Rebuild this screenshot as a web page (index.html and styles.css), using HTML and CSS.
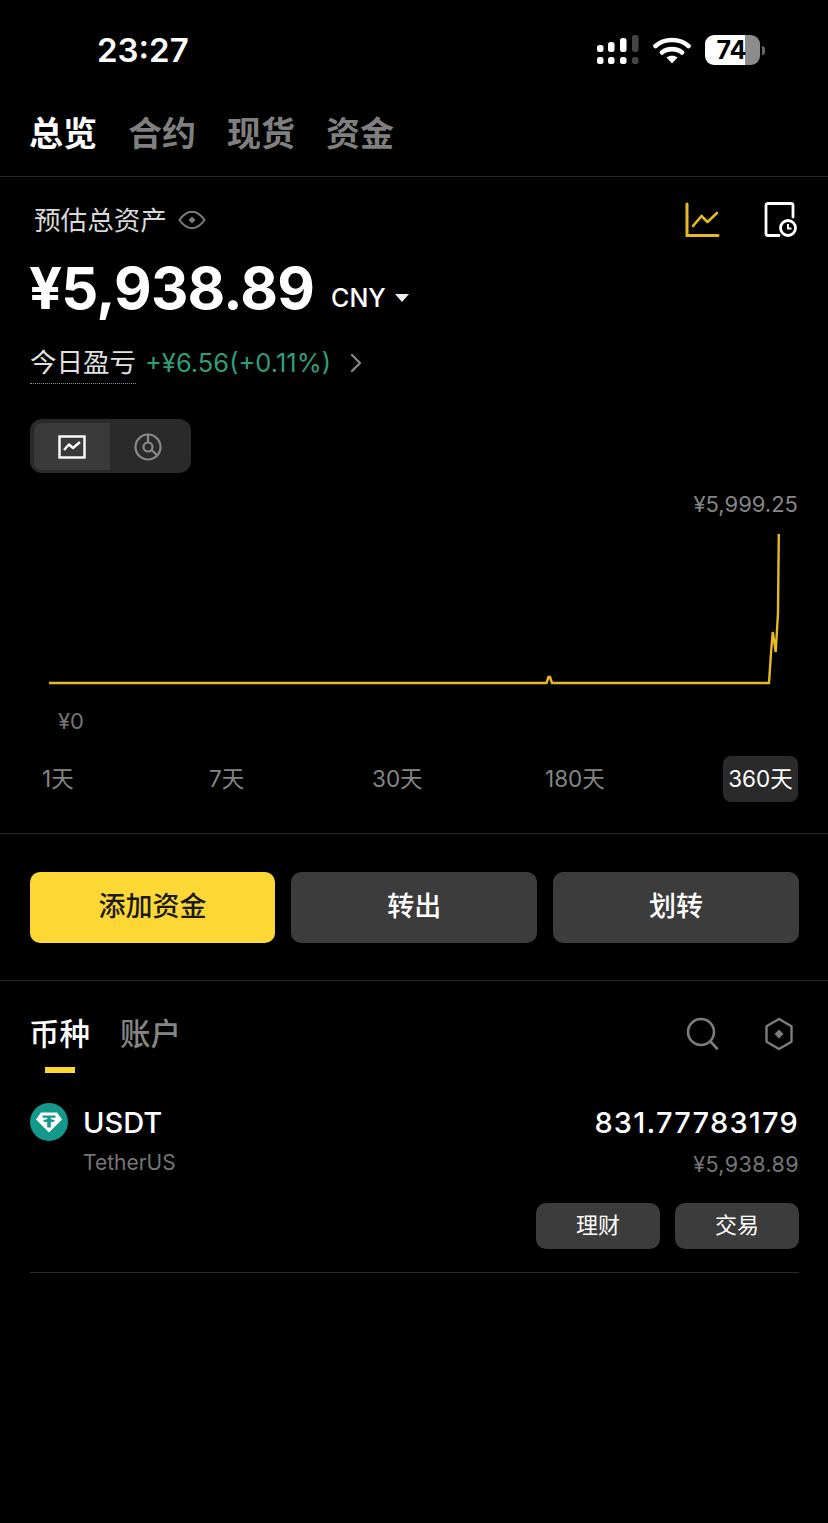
FILE: index.html
```html
<!DOCTYPE html>
<html lang="zh-CN">
<head>
    <meta charset="UTF-8">
    <meta name="viewport" content="width=device-width, initial-scale=1.0">
    <title>总览</title>
    <link rel="stylesheet" href="styles.css">
</head>
<body>
    <div class="status-bar">
        <div class="time">23:27</div>
        <div class="status-icons">
            <svg class="signal" width="44" height="30" viewBox="0 0 44 30">
                <rect x="1" y="10" width="6.500" height="7" rx="2.500" fill="#fff"/>
                <rect x="12" y="7" width="6.500" height="10" rx="2.500" fill="#fff"/>
                <rect x="24" y="3" width="6.500" height="14" rx="2.500" fill="#fff"/>
                <rect x="36" y="0" width="6.500" height="17" rx="2.500" fill="#444"/>
                <rect x="1" y="22" width="6.500" height="7" rx="2.500" fill="#fff"/>
                <rect x="12" y="22" width="6.500" height="7" rx="2.500" fill="#fff"/>
                <rect x="24" y="22" width="6.500" height="7" rx="2.500" fill="#fff"/>
                <rect x="36" y="22" width="6.500" height="7" rx="2.500" fill="#444"/>
            </svg>
            <svg class="wifi" width="38" height="28" viewBox="0 0 38 28">
                <path d="M2.500 10 C11 2 27 2 35.500 10" fill="none" stroke="#fff" stroke-width="4.600" stroke-linecap="round"/>
                <path d="M9 16.500 C14 12 24 12 29 16.500" fill="none" stroke="#fff" stroke-width="4.600" stroke-linecap="round"/>
                <path d="M13.500 21.500 C16.500 19 21.500 19 24.500 21.500 L19 27.500 Z" fill="#fff"/>
            </svg>
            <div class="battery">74</div>
            <div class="battery-nub"></div>
        </div>
    </div>

    <div class="top-tabs">
        <span class="top-tab active">总览</span>
        <span class="top-tab">合约</span>
        <span class="top-tab">现货</span>
        <span class="top-tab">资金</span>
    </div>

    <div class="overview">
        <div class="label-row">
            <span class="label">预估总资产</span>
            <svg width="28" height="20" viewBox="0 0 28 20">
                <path d="M1.500 10 C6 3.500 10 1.800 14 1.800 C18 1.800 22 3.500 26.500 10 C22 16.500 18 18.200 14 18.200 C10 18.200 6 16.500 1.500 10 Z" fill="none" stroke="#7d7d7d" stroke-width="2"/>
                <path d="M14 6.500 L17.500 10 L14 13.500 L10.500 10 Z" fill="#7d7d7d"/>
            </svg>
            <div class="label-actions">
                <svg width="36" height="36" viewBox="0 0 36 36">
                    <path d="M3 2 V33.500 H34" fill="none" stroke="#e8b923" stroke-width="3" stroke-linecap="round"/>
                    <path d="M9 24 L17.500 14 L23.500 20 L33 11" fill="none" stroke="#e8b923" stroke-width="2.600" stroke-linecap="round" stroke-linejoin="round"/>
                </svg>
                <svg width="34" height="36" viewBox="0 0 34 36">
                    <path d="M15 33.500 H4 C2.600 33.500 2 32.900 2 31.500 V3.500 C2 2.100 2.600 1.500 4 1.500 H27 C28.400 1.500 29 2.100 29 3.500 V15" fill="none" stroke="#fff" stroke-width="2.800" stroke-linecap="round"/>
                    <circle cx="24" cy="26" r="7.500" fill="none" stroke="#fff" stroke-width="2.800"/>
                    <path d="M24 22 V26.500 H27.500" fill="none" stroke="#fff" stroke-width="2"/>
                </svg>
            </div>
        </div>
        <div class="amount-row">
            <span class="amount">¥5,938.89</span>
            <span class="currency">CNY</span>
            <span class="caret"></span>
        </div>
        <div class="pnl-row">
            <span class="pnl-label">今日盈亏</span>
            <span class="pnl-value">+¥6.56(+0.11%)</span>
            <svg width="12" height="20" viewBox="0 0 12 20">
                <path d="M2 2 L10 10 L2 18" fill="none" stroke="#8a8a8a" stroke-width="2.200" stroke-linecap="round" stroke-linejoin="round"/>
            </svg>
        </div>
        <div class="toggle">
            <div class="toggle-item active">
                <svg width="28" height="24" viewBox="0 0 28 24">
                    <rect x="1.500" y="1.500" width="25" height="21" fill="none" stroke="#fff" stroke-width="2.400"/>
                    <path d="M6 15 L11 9.500 L15 13 L22 7" fill="none" stroke="#fff" stroke-width="2.400" stroke-linejoin="round"/>
                </svg>
            </div>
            <div class="toggle-item">
                <svg width="28" height="28" viewBox="0 0 28 28">
                    <circle cx="14" cy="14" r="12.500" fill="none" stroke="#8a8a8a" stroke-width="2.200"/>
                    <circle cx="14" cy="14" r="4.500" fill="none" stroke="#8a8a8a" stroke-width="2.200"/>
                    <path d="M14 2 V9.500 M17.500 17 L24 23" fill="none" stroke="#8a8a8a" stroke-width="2.200"/>
                </svg>
            </div>
        </div>

        <div class="chart-max">¥5,999.25</div>
        <svg class="chart" width="770" height="170" viewBox="30 525 770 170">
            <path d="M49 683 H546.500 L548.500 677 L550 677 L552 683 H769 L771 653 L772.700 632 L774 640 L775.700 652 L778 613 L778.800 534" fill="none" stroke="#e8b923" stroke-width="2.400"/>
        </svg>
        <div class="chart-min">¥0</div>
        <div class="ranges">
            <span class="range">1天</span>
            <span class="range">7天</span>
            <span class="range">30天</span>
            <span class="range">180天</span>
            <span class="range active">360天</span>
        </div>
    </div>

    <div class="actions">
        <div class="btn primary">添加资金</div>
        <div class="btn">转出</div>
        <div class="btn">划转</div>
    </div>

    <div class="assets">
        <div class="asset-tabs">
            <div class="asset-tab active">币种</div>
            <div class="asset-tab">账户</div>
            <div class="asset-icons">
                <svg width="34" height="34" viewBox="0 0 34 34">
                    <circle cx="15" cy="15" r="13" fill="none" stroke="#7d7d7d" stroke-width="2.600"/>
                    <path d="M24.500 24.500 L31 31.500" fill="none" stroke="#7d7d7d" stroke-width="2.600" stroke-linecap="round"/>
                </svg>
                <svg width="30" height="34" viewBox="0 0 30 34">
                    <path d="M15 2 L27.500 9.300 V24.700 L15 32 L2.500 24.700 V9.300 Z" fill="none" stroke="#7d7d7d" stroke-width="2.400" stroke-linejoin="round"/>
                    <path d="M15 12.500 L19.500 17 L15 21.500 L10.500 17 Z" fill="#7d7d7d"/>
                </svg>
            </div>
        </div>
        <div class="coin">
            <div class="coin-top">
                <svg class="coin-icon" width="38" height="38" viewBox="0 0 38 38">
                    <circle cx="19" cy="19" r="19" fill="#12998c"/>
                    <path d="M11 9.500 H27 L32 16.500 L19 29.500 L6 16.500 Z" fill="#fff"/>
                    <path d="M12.500 12.500 H25.500 V14.800 H20.800 V16.300 C23 16.500 24.800 17 24.800 17.700 C24.800 18.400 23 18.900 20.800 19.100 V24.500 H17.200 V19.100 C15 18.900 13.200 18.400 13.200 17.700 C13.200 17 15 16.500 17.200 16.300 V14.800 H12.500 Z" fill="#12998c"/>
                </svg>
                <div class="coin-name">
                    <div class="coin-symbol">USDT</div>
                    <div class="coin-full">TetherUS</div>
                </div>
                <div class="coin-values">
                    <div class="coin-amount">831.77783179</div>
                    <div class="coin-cny">¥5,938.89</div>
                </div>
            </div>
            <div class="coin-btns">
                <div class="coin-btn">理财</div>
                <div class="coin-btn">交易</div>
            </div>
        </div>
    </div>
</body>
</html>
```

FILE: styles.css
```css
* {
    box-sizing: border-box;
}
body {
    margin: 0;
    width: 828px;
    min-height: 1523px;
    background: #000;
    color: #fff;
    font-family: Inter, "Noto Sans CJK SC", sans-serif;
    overflow: hidden;
}
.status-bar {
    height: 100px;
    display: flex;
    align-items: center;
    justify-content: space-between;
    padding: 0 63px 0 97px;
}
.time {
    font-size: 33px;
    font-weight: 600;
    line-height: 40px;
}
.status-icons {
    display: flex;
    align-items: center;
}
.signal {
    margin-right: 13px;
}
.wifi {
    margin-right: 14px;
}
.battery {
    width: 55px;
    height: 30px;
    border-radius: 9px;
    background: linear-gradient(90deg, #fff 0, #fff 40px, #8c8c8c 40px, #8c8c8c 100%);
    color: #000;
    font-size: 25px;
    font-weight: 700;
    line-height: 30px;
    text-align: center;
    padding-right: 2px;
}
.battery-nub {
    width: 3px;
    height: 9px;
    margin-left: 2px;
    border-radius: 0 3px 3px 0;
    background: #666;
}
.top-tabs {
    height: 77px;
    display: flex;
    gap: 31px;
    padding: 0 29px;
    border-bottom: 1px solid #262626;
}
.top-tab {
    font-size: 34px;
    font-weight: 700;
    line-height: 68px;
    color: #7f7f7f;
}
.top-tab.active {
    color: #fff;
}
.overview {
    padding: 0 30px 31px;
    border-bottom: 1px solid #262626;
}
.label-row {
    height: 40px;
    margin-top: 23px;
    display: flex;
    align-items: center;
}
.label {
    font-size: 26.600px;
    line-height: 40px;
    color: #d8d8d8;
    margin: 0 11px 0 4px;
}
.label-actions {
    margin-left: auto;
    display: flex;
    align-items: center;
    gap: 44px;
}
.amount-row {
    height: 70px;
    margin-top: 13px;
    margin-left: -1px;
    display: flex;
    align-items: center;
}
.amount {
    font-size: 58px;
    font-weight: 700;
    line-height: 68px;
    letter-spacing: -0.8px;
}
.currency {
    font-size: 25px;
    font-weight: 500;
    margin: 20px 9px 0 17px;
}
.caret {
    width: 0;
    height: 0;
    margin-top: 20px;
    border-left: 7.500px solid transparent;
    border-right: 7.500px solid transparent;
    border-top: 8px solid #eee;
}
.pnl-row {
    height: 40px;
    margin-top: 20px;
    display: flex;
    align-items: center;
}
.pnl-label {
    font-size: 26.500px;
    line-height: 41px;
    color: #e0e0e0;
    border-bottom: 1px dotted #8a8a8a;
    margin-right: 9px;
}
.pnl-value {
    font-size: 25.500px;
    line-height: 40px;
    color: #2f9e78;
    margin-right: 19px;
}
.toggle {
    width: 161px;
    height: 54px;
    margin-top: 36px;
    padding: 4px 0 3px 4px;
    display: flex;
    background: #2a2a2a;
    border-radius: 12px;
}
.toggle-item {
    width: 76px;
    display: flex;
    align-items: center;
    justify-content: center;
}
.toggle-item.active {
    background: #3a3a3a;
    border-radius: 8px 0 0 8px;
}
.chart-max {
    margin-top: 19px;
    font-size: 22px;
    line-height: 24px;
    color: #858585;
    text-align: right;
}
.chart {
    display: block;
    margin-top: 9px;
}
.chart-min {
    margin: 14px 0 0 28px;
    font-size: 22px;
    line-height: 24px;
    color: #757575;
}
.ranges {
    margin: 23px 0 0 5px;
    display: grid;
    grid-template-columns: 167px 163px 173px 185px 75px;
    align-items: center;
}
.range {
    justify-self: start;
    padding: 0 7px;
    font-size: 22.500px;
    line-height: 46px;
    color: #858585;
    white-space: nowrap;
}
.range.active {
    width: 75px;
    padding: 0;
    text-align: center;
    color: #fff;
    background: #2a2a2a;
    border-radius: 8px;
}
.actions {
    display: flex;
    gap: 16px;
    padding: 38px 29px 37px 29.500px;
    border-bottom: 1px solid #262626;
}
.btn {
    flex: 1;
    height: 71px;
    line-height: 69px;
    text-align: center;
    font-size: 27px;
    font-weight: 500;
    background: #3c3c3c;
    border-radius: 10px;
}
.btn.primary {
    background: #fdd835;
    color: #1a1a1a;
}
.assets {
    padding: 33px 29px 0 30px;
}
.asset-tabs {
    display: flex;
    gap: 30px;
    height: 59px;
    margin-left: -1px;
}
.asset-tab {
    font-size: 30.500px;
    font-weight: 500;
    line-height: 40px;
    color: #858585;
}
.asset-tab.active {
    color: #fff;
}
.asset-tab.active::after {
    content: "";
    display: block;
    width: 30px;
    height: 6px;
    margin: 13px auto 0;
    background: #fdd835;
}
.asset-icons {
    margin-left: auto;
    display: flex;
    align-items: center;
    gap: 44px;
    height: 40px;
    padding-right: 5px;
}
.coin {
    margin-top: 30px;
    padding-bottom: 23px;
    border-bottom: 1px solid #2a2a2a;
}
.coin-top {
    display: flex;
    align-items: flex-start;
}
.coin-icon {
    margin: 0 15px 0 0;
}
.coin-symbol,
.coin-amount {
    font-size: 29px;
    font-weight: 500;
    line-height: 40px;
}
.coin-amount {
    letter-spacing: 1.200px;
}
.coin-full,
.coin-cny {
    font-size: 21.500px;
    line-height: 40px;
    margin-top: 0;
    color: #757575;
}
.coin-full {
    font-size: 21px;
}
.coin-cny {
    margin-top: 1px;
    letter-spacing: 0.400px;
}
.coin-values {
    margin-left: auto;
    text-align: right;
}
.coin-btns {
    display: flex;
    justify-content: flex-end;
    gap: 15px;
    margin-top: 19px;
}
.coin-btn {
    width: 124px;
    height: 46px;
    line-height: 45px;
    text-align: center;
    font-size: 22px;
    background: #3c3c3c;
    border-radius: 10px;
}
```
